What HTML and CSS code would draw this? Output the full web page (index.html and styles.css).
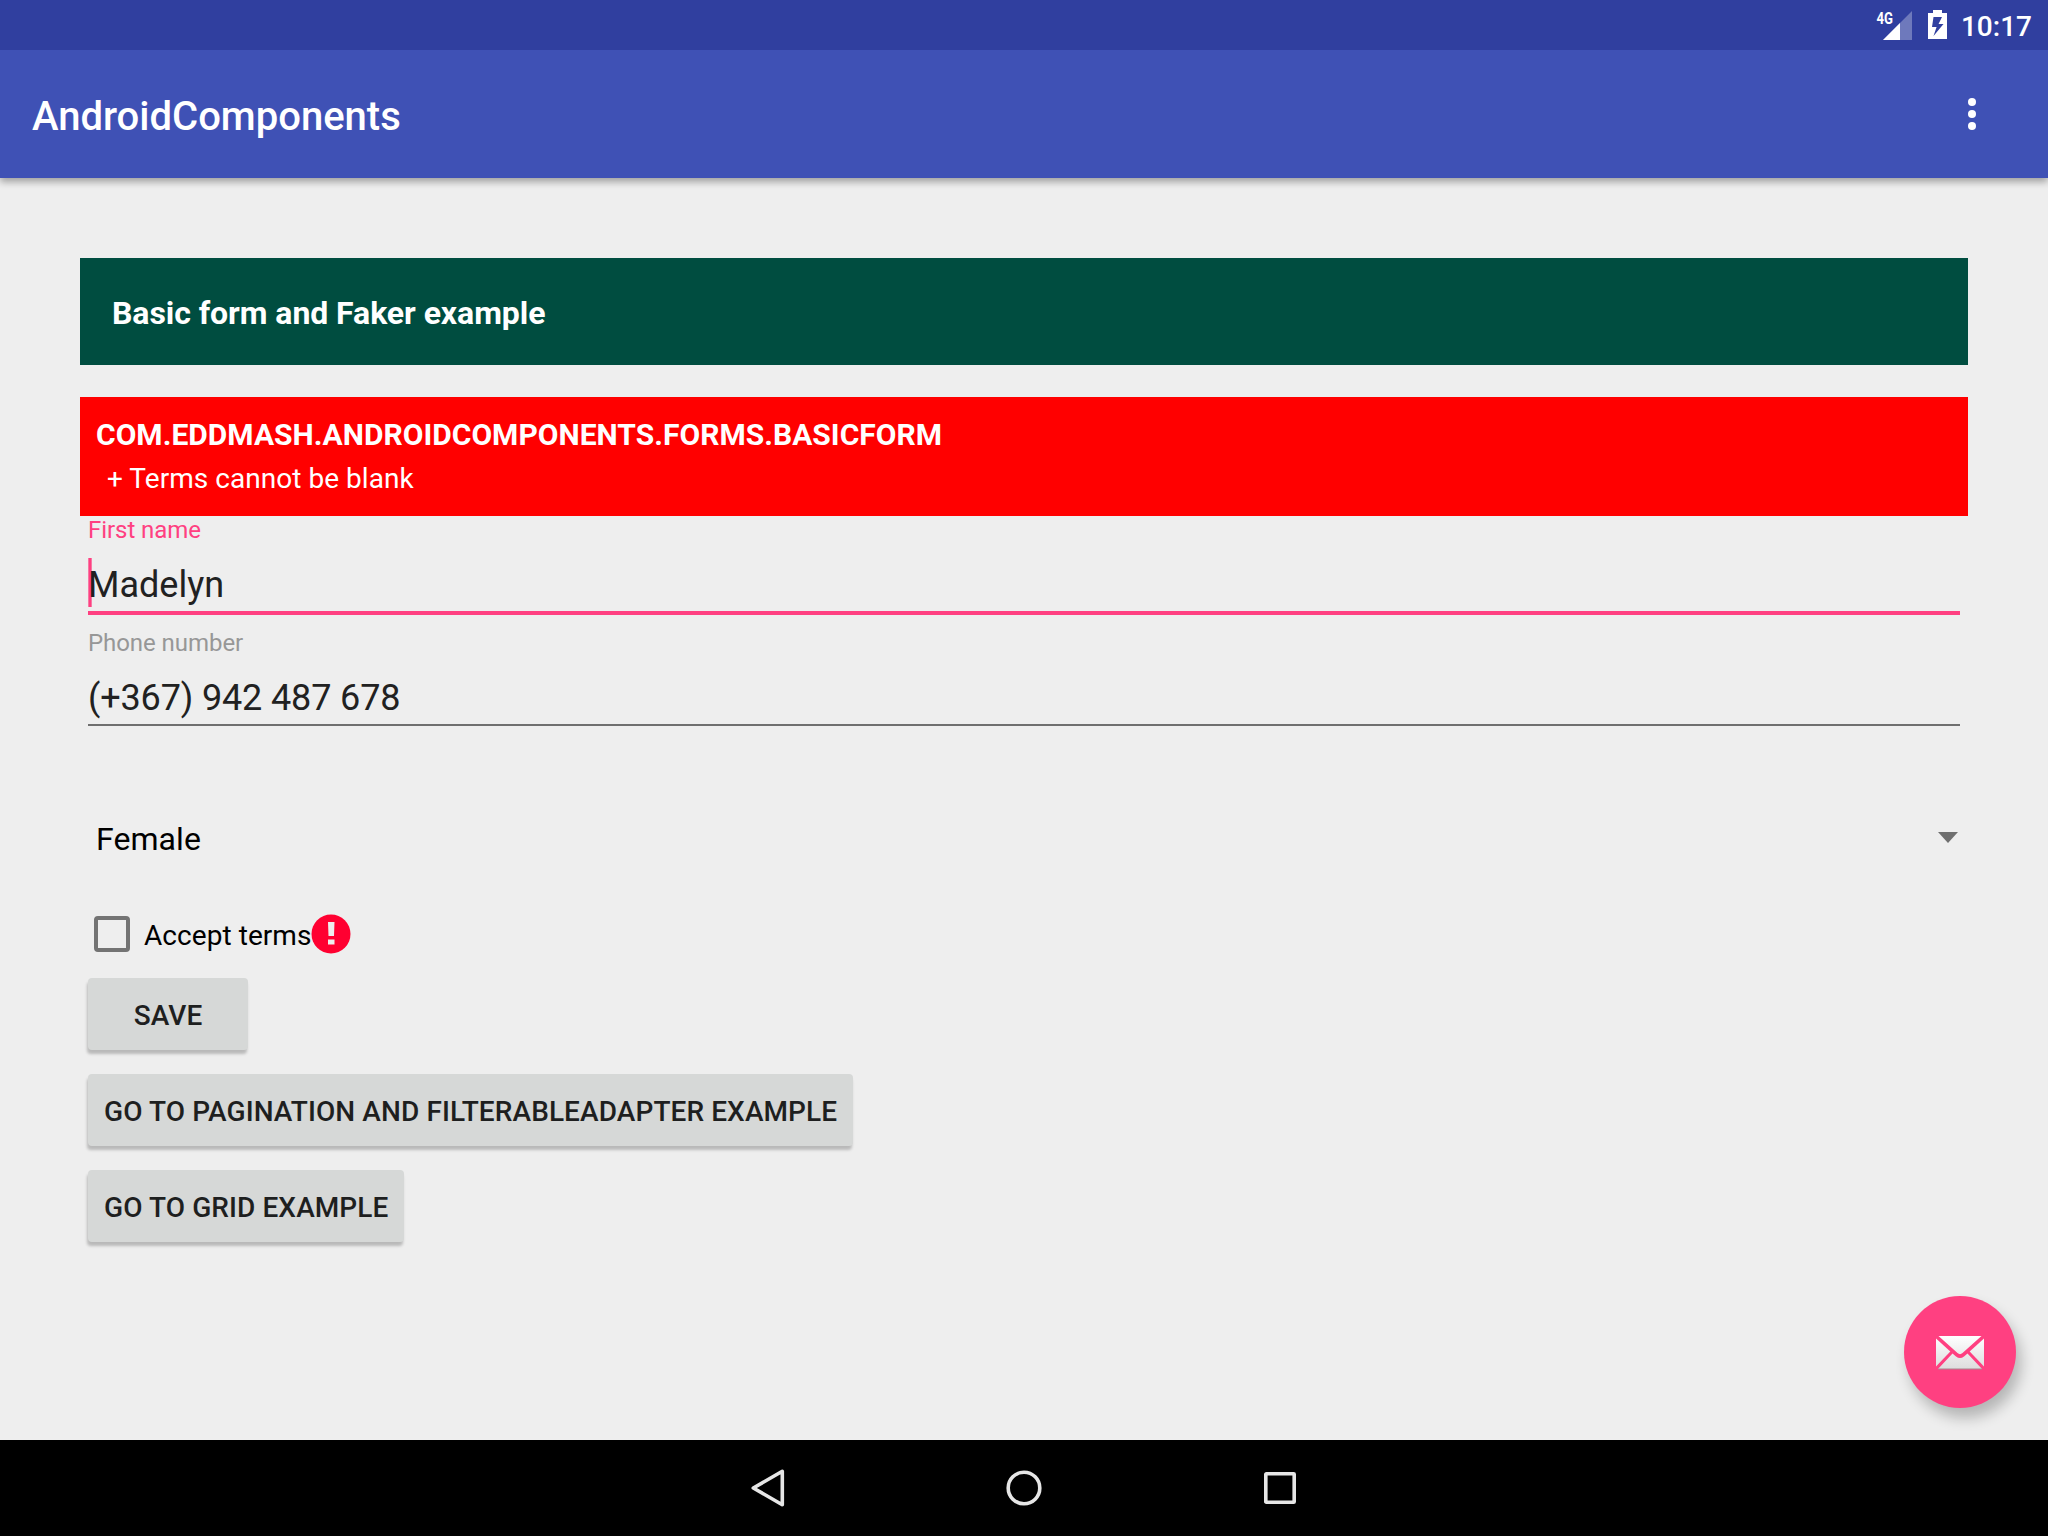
FILE: index.html
```html
<!DOCTYPE html>
<html lang="en">
<head>
<meta charset="utf-8">
<title>AndroidComponents</title>
<link rel="stylesheet" href="styles.css">
</head>
<body>
<div class="screen">
  <div class="status-bar">
    <svg class="signal" width="36" height="30" viewBox="0 0 36 30">
      <path d="M36 1V30H7Z" fill="#fff" fill-opacity=".3"/>
      <path d="M24 13V30H7Z" fill="#fff"/>
      <text class="network" x="0.500" y="13.600" textLength="16.500" lengthAdjust="spacingAndGlyphs">4G</text>
    </svg>
    <svg class="battery" width="19" height="29" viewBox="0 0 19 29">
      <path fill="#fff" fill-rule="evenodd" d="M5 0H14V3H19V29H0V3H5ZM5.500 7L4 17H8.600L5.500 26L15.500 14H10.500L14 7Z"/>
    </svg>
    <span class="clock">10:17</span>
  </div>
  <header class="app-bar">
    <h1 class="app-title">AndroidComponents</h1>
    <svg class="overflow" width="8" height="32" viewBox="0 0 8 32" fill="#fff">
      <circle cx="4" cy="4" r="4"/><circle cx="4" cy="16" r="4"/><circle cx="4" cy="28" r="4"/>
    </svg>
  </header>
  <main class="content">
    <h2 class="heading">Basic form and Faker example</h2>
    <div class="errors">
      <div class="errors-title">COM.EDDMASH.ANDROIDCOMPONENTS.FORMS.BASICFORM</div>
      <div class="errors-item">+ Terms cannot be blank</div>
    </div>
    <div class="field field-focused">
      <div class="field-label">First name</div>
      <div class="field-value"><span class="caret"></span>Madelyn</div>
    </div>
    <div class="field">
      <div class="field-label">Phone number</div>
      <div class="field-value field-digits">(+367) 942 487 678</div>
    </div>
    <div class="spinner">
      <span>Female</span>
      <svg width="20" height="11" viewBox="0 0 20 11"><path d="M0 0H20L10 11Z" fill="#6f6f6f"/></svg>
    </div>
    <div class="terms">
      <span class="checkbox"></span>
      <span class="terms-label">Accept terms</span>
      <svg width="40" height="40" viewBox="0 0 40 40">
        <circle cx="20" cy="20" r="19.500" fill="#ff0031"/>
        <path d="M17 8H23.500L23 22H17.500ZM17 25.500H23.500V30.500H17Z" fill="#eee"/>
      </svg>
    </div>
    <div class="actions">
      <div class="button">SAVE</div>
      <div class="button">GO TO PAGINATION AND FILTERABLEADAPTER EXAMPLE</div>
      <div class="button">GO TO GRID EXAMPLE</div>
    </div>
    <div class="fab">
      <svg width="48" height="34" viewBox="0 0 48 34">
        <defs>
          <linearGradient id="paper" x1="0" y1="0" x2="0" y2="34" gradientUnits="userSpaceOnUse">
            <stop offset="0" stop-color="#fff"/><stop offset="1" stop-color="#dcdcdc"/>
          </linearGradient>
        </defs>
        <g fill="url(#paper)">
          <path d="M2.500 0H45.500L26.500 17Q24 19.300 21.500 17Z"/>
          <path d="M0 2.500L14.300 15.500L0 30.500Z"/>
          <path d="M48 2.500L33.700 15.500L48 30.500Z"/>
          <path d="M16.500 17.500L20 20.500Q24 23.500 28 20.500L31.500 17.500L46 33H2Z"/>
        </g>
        <path d="M2 33H46" stroke="#a8868f" stroke-width="1"/>
      </svg>
    </div>
  </main>
  <nav class="nav-bar">
    <svg width="40" height="40" viewBox="0 0 40 40"><path d="M34.300 3.300V36.700L5.300 20Z"/></svg>
    <svg width="40" height="40" viewBox="0 0 40 40"><circle cx="20" cy="20" r="15.800"/></svg>
    <svg width="40" height="40" viewBox="0 0 40 40"><rect x="5.800" y="5.800" width="28.400" height="28.400" rx=".5"/></svg>
  </nav>
</div>
</body>
</html>
```
FILE: styles.css
```css
* { box-sizing: border-box; }
body { margin: 0; font-family: Roboto, "Noto Sans", sans-serif; }
svg { display: block; flex: none; }
.screen {
  display: flex;
  flex-direction: column;
  width: 2048px;
  height: 1536px;
  background: #eee;
  overflow: hidden;
}
.status-bar {
  position: relative;
  z-index: 2;
  display: flex;
  align-items: flex-start;
  justify-content: flex-end;
  height: 50px;
  padding: 10px 16px 0 0;
  background: #303f9f;
  color: #fff;
}
.signal { margin-right: 16px; overflow: visible; }
.network { font: 700 16px Roboto, sans-serif; fill: #fff; }
.battery { margin-right: 14px; }
.clock { font-size: 28px; font-weight: 500; line-height: 33px; }
.app-bar {
  display: flex;
  align-items: center;
  justify-content: space-between;
  height: 128px;
  padding: 0 72px 0 32px;
  background: #3f51b5;
  box-shadow: 0 4px 7px rgba(0, 0, 0, .32);
  z-index: 1;
}
.app-title {
  margin: 0;
  padding-top: 6px;
  color: #fff;
  font-size: 40px;
  font-weight: 500;
  line-height: 48px;
}
.content { position: relative; flex: 1; padding: 80px 80px 0; }
.heading {
  height: 107px;
  margin: 0 0 32px;
  padding: 2px 32px 0;
  background: #004d40;
  color: #fff;
  font-size: 32px;
  font-weight: 700;
  letter-spacing: -.06px;
  line-height: 107px;
}
.errors {
  height: 119px;
  padding: 16px 16px 0;
  background: #f00;
  color: #fff;
  line-height: 43px;
}
.errors-title { font-size: 30px; font-weight: 700; letter-spacing: .03px; }
.errors-item { padding-left: 11px; font-size: 28px; letter-spacing: .04px; line-height: 45px; }
.field { margin: 0 8px 14px; }
.field-label { height: 28px; color: #979797; font-size: 24px; letter-spacing: -.06px; line-height: 28px; }
.field-value {
  position: relative;
  height: 69px;
  padding-top: 15px;
  border-bottom: 2px solid #6f6f6f;
  color: #212121;
  font-size: 36px;
  line-height: 53px;
}
.field-digits { letter-spacing: -.14px; }
.field-focused .field-label { color: #ff4081; }
.field-focused .field-value { z-index: 0; height: 71px; border-bottom: 4px solid #ff4081; }
.caret {
  position: absolute;
  z-index: -1;
  left: 0;
  top: 14px;
  width: 4px;
  height: 49px;
  background: #ff4081;
  border: solid #f779a5;
  border-width: 0 1px;
}
.spinner {
  display: flex;
  align-items: center;
  justify-content: space-between;
  height: 96px;
  margin-top: 65px;
  padding: 0 10px 0 16px;
  color: #000;
  font-size: 32px;
  letter-spacing: .06px;
}
.spinner svg { margin-bottom: 3px; }
.terms { display: flex; align-items: center; height: 64px; margin-top: 15px; padding-left: 14px; }
.checkbox { width: 36px; height: 36px; border: 4px solid #737373; border-radius: 4px; }
.terms-label { width: 167px; margin-left: 14px; padding-top: 2px; font-size: 28px; letter-spacing: .06px; white-space: nowrap; }
.actions {
  display: flex;
  flex-direction: column;
  align-items: flex-start;
  gap: 24px;
  margin-top: 12px;
  padding-left: 8px;
}
.button {
  min-width: 160px;
  height: 72px;
  padding: 2px 16px 0;
  border-radius: 4px;
  background: #d6d8d7;
  box-shadow: -1px 4px 3px rgba(0, 0, 0, .22);
  color: #1e1f1f;
  font-size: 28px;
  font-weight: 500;
  letter-spacing: .09px;
  line-height: 71px;
  text-align: center;
  white-space: nowrap;
}
.fab {
  position: absolute;
  right: 32px;
  bottom: 32px;
  display: flex;
  align-items: center;
  justify-content: center;
  width: 112px;
  height: 112px;
  padding-top: 2px;
  border-radius: 50%;
  background: #ff4081;
  box-shadow: 5px 10px 14px rgba(0, 0, 0, .24);
}
.nav-bar {
  position: relative;
  display: flex;
  align-items: center;
  justify-content: center;
  gap: 216px;
  height: 96px;
  background: #000;
}
.nav-bar svg { fill: none; stroke: #e6e6e6; stroke-width: 3.6; stroke-linejoin: round; }
```
